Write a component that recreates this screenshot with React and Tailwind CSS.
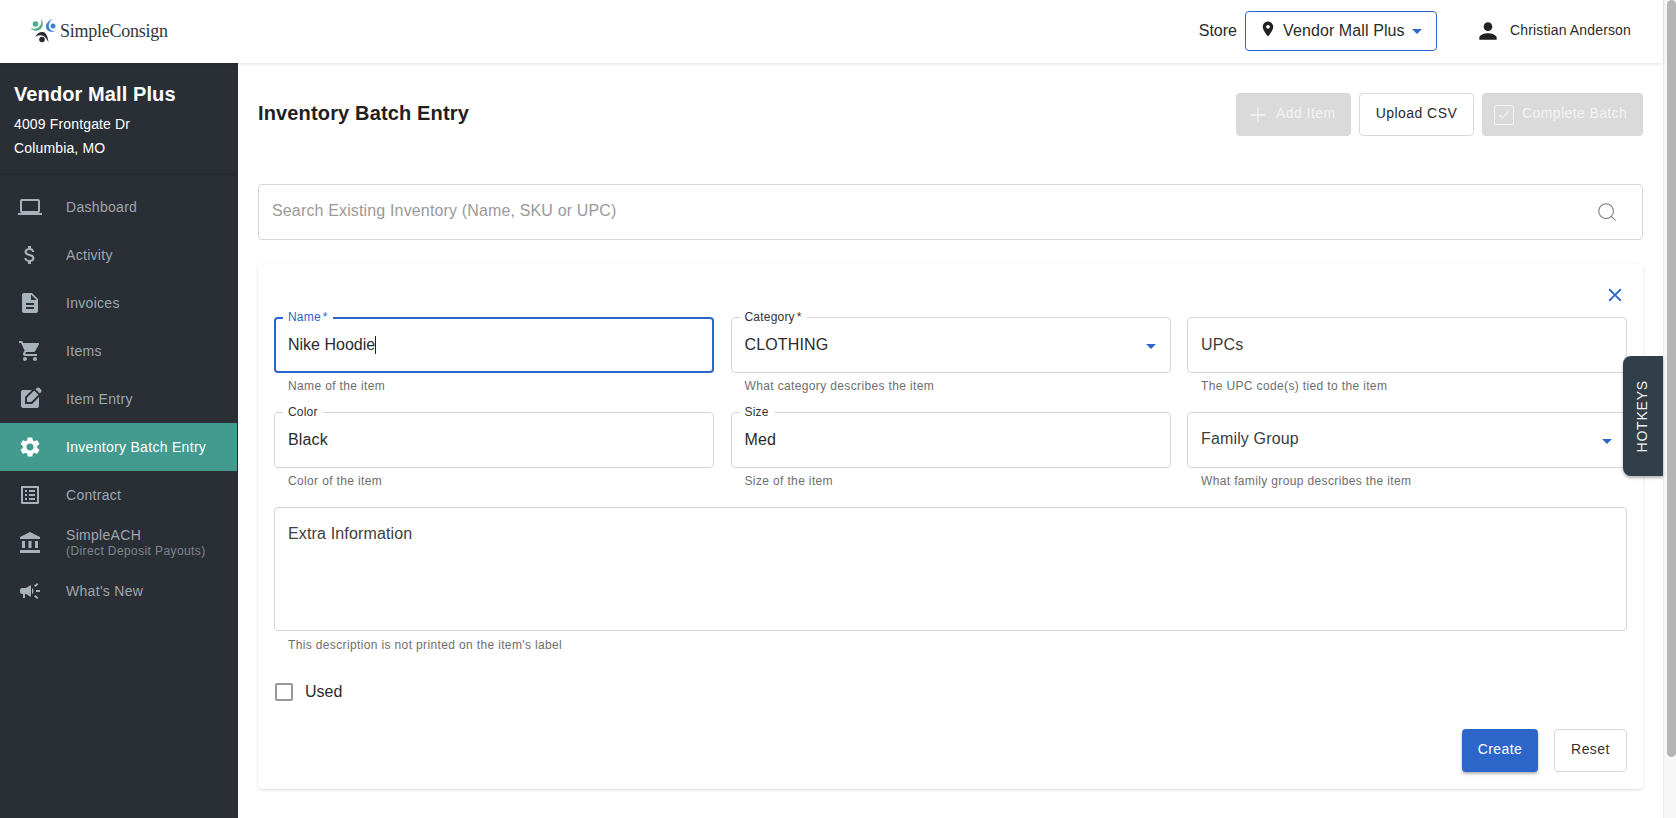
import { Plus, Search } from "lucide-react";
import {
  MdAccountBalance,
  MdArrowDropDown,
  MdAttachMoney,
  MdCampaign,
  MdClose,
  MdDescription,
  MdEditSquare,
  MdLaptop,
  MdListAlt,
  MdLocationOn,
  MdPerson,
  MdSettings,
  MdShoppingCart,
} from "react-icons/md";

const navItems = [
  { label: "Dashboard", icon: MdLaptop },
  { label: "Activity", icon: MdAttachMoney },
  { label: "Invoices", icon: MdDescription },
  { label: "Items", icon: MdShoppingCart },
  { label: "Item Entry", icon: MdEditSquare },
  { label: "Inventory Batch Entry", icon: MdSettings, active: true },
  { label: "Contract", icon: MdListAlt },
  { label: "SimpleACH", sub: "(Direct Deposit Payouts)", icon: MdAccountBalance },
  { label: "What's New", icon: MdCampaign },
];

function Logo() {
  return (
    <div className="flex items-center gap-[4px]">
      <svg width="26" height="26" viewBox="0 0 26 26">
        <circle cx="5.5" cy="6" r="2.8" fill="#4fae84" />
        <path d="M0.5 10C4 11.5 9 10.5 10.5 7C11.5 5 11.5 3 11 0.5C13.5 4 13.5 9 10 11.5C7 13.5 3 13 0.5 10Z" fill="#4fae84" />
        <circle cx="23" cy="8" r="2.5" fill="#3f7fd0" />
        <path d="M22 1C18 3 15.5 6 16 9.5C16.5 12.5 20 14.5 25 14C21 13 19 11 18.8 8.5C18.6 6 20 3 22 1Z" fill="#3f7fd0" />
        <path d="M5 19C7 15.5 10 13.5 13 14C16 14.5 18 18.5 18.5 24.5C16.5 20.5 15 18 12 17.5C9.5 17 7 17.5 5 19Z" fill="#26292d" />
        <circle cx="12" cy="21.5" r="2.8" fill="#26292d" />
      </svg>
      <span className="mt-[1px] font-['Liberation_Serif',serif] text-[18px] leading-none tracking-[-0.25px] text-[#33363a]">
        SimpleConsign
      </span>
    </div>
  );
}

function Field({ label, value, helper, focused, select, required, children, tall, firstRow, dim }) {
  const boxHeight = tall ? "h-[124px]" : firstRow ? "h-[56px]" : "h-[55.5px]";
  const helperHeight = tall ? "h-[48px] pt-[6px]" : firstRow ? "h-[39px] pt-[5px]" : "h-[39.5px] pt-[5px]";

  return (
    <div>
      <div
        className={`relative rounded-[4px] bg-white ${boxHeight} ${
          focused ? "border-2 border-[#2d66c9]" : "border border-[#d6d6d6]"
        }`}
      >
        {label && (
          <span
            className={`absolute ${focused ? "-top-[10px] left-[7px]" : "-top-[9px] left-[8px]"} bg-white px-[5px] text-xs leading-[16px] tracking-[0.2px] ${
              focused ? "text-[#2d66c9]" : "text-[#333]"
            }`}
          >
            {label}
            {required && <span className="ml-[2px]">*</span>}
          </span>
        )}
        <div
          className={`flex items-center text-base ${dim ? "text-[#3d3d3d]" : "text-[#2b2b2b]"} ${
            focused ? "pl-[12px] tracking-[0]" : "pl-[13px] tracking-[0.15px]"
          } ${tall ? "pt-[14px]" : "h-full"}`}
        >
          {value}
          {children}
        </div>
        {select && (
          <MdArrowDropDown className="absolute right-[7px] top-[16px] text-[#2d66c9]" size={24} />
        )}
      </div>
      <div className={`pl-[14px] text-xs leading-[16px] tracking-[0.36px] text-[#6e6e6e] ${helperHeight}`}>
        {helper}
      </div>
    </div>
  );
}

export default function App() {
  return (
    <div className="relative flex h-screen w-full overflow-hidden bg-white font-['Liberation_Sans',Arial,sans-serif]">
      <div className="flex h-full w-[1663px] shrink-0 flex-col">
        <header className="relative z-10 flex h-[63px] shrink-0 items-center justify-between bg-white pb-[2px] pl-[30px] pr-[32px] shadow-[0_1px_3px_rgba(0,0,0,0.12)]">
          <Logo />
          <div className="flex items-center">
            <span className="mr-[8px] text-base text-[#2b2b2b]">Store</span>
            <div className="flex h-[40px] w-[192px] items-center rounded-[4px] border border-[#2d66c9] pl-[13px] text-[#2b2b2b]">
              <MdLocationOn size={18} className="mb-[4px] text-[#222]" />
              <span className="ml-[6px] text-base tracking-[0.1px]">Vendor Mall Plus</span>
              <MdArrowDropDown size={24} className="text-[#2d66c9]" />
            </div>
            <MdPerson size={26} className="ml-[38px] text-[#222]" />
            <span className="mb-[2px] ml-[9px] text-sm tracking-[0.15px] text-[#2b2b2b]">Christian Anderson</span>
          </div>
        </header>

        <div className="flex min-h-0 flex-1">
          <aside className="h-full w-[238px] shrink-0 bg-[#2a2f36]">
            <div className="h-[112px] border-b border-[#23272d] pl-[14px] pt-[19px] text-white">
              <div className="text-xl font-bold leading-[24px] tracking-[0.1px]">Vendor Mall Plus</div>
              <div className="mt-[6px] text-sm leading-[24px] tracking-[0.15px]">4009 Frontgate Dr</div>
              <div className="text-sm leading-[24px] tracking-[0.15px]">Columbia, MO</div>
            </div>
            <nav className="pt-[8px]">
              {navItems.map((item) => {
                const Icon = item.icon;
                return (
                  <div
                    key={item.label}
                    className={`flex h-[48px] w-[237px] items-center ${
                      item.active ? "bg-[#439a8f] text-white" : "text-[#9fa6ad]"
                    }`}
                  >
                    <div className={`flex w-[66px] justify-center pr-[6px] ${item.active ? "text-white" : "text-[#a7b2bb]"}`}>
                      <Icon size={24} />
                    </div>
                    <div>
                      <div className="text-sm leading-[16px] tracking-[0.3px]">{item.label}</div>
                      {item.sub && (
                        <div className="text-xs leading-[16px] tracking-[0.4px] text-[#7f868d]">{item.sub}</div>
                      )}
                    </div>
                  </div>
                );
              })}
            </nav>
          </aside>

          <main className="min-w-0 flex-1 px-[20px] pt-[30px]">
            <div className="flex h-[91px] items-start justify-between">
              <h1 className="pt-[8px] text-xl font-bold leading-[24px] tracking-[0.15px] text-[#212121]">Inventory Batch Entry</h1>
              <div className="flex gap-[8px]">
                <button className="flex h-[43px] w-[115px] items-center gap-[6px] rounded-[4px] bg-[#dadada] pl-[10px] text-sm tracking-[0.45px] text-[#f3f3f3]">
                  <Plus size={24} strokeWidth={1.4} />
                  <span className="mb-[3px]">Add Item</span>
                </button>
                <button className="h-[43px] w-[115px] rounded-[4px] border border-[#d8d8d8] bg-white pb-[3px] text-sm tracking-[0.45px] text-[#2b2b2b]">
                  Upload CSV
                </button>
                <button className="flex h-[43px] w-[161px] items-center gap-[8px] rounded-[4px] bg-[#dadada] pl-[12px] text-sm tracking-[0.4px] text-[#f3f3f3]">
                  <span className="flex h-[20px] w-[20px] items-center justify-center rounded-[2px] border border-[#f3f3f3]">
                    <svg width="12" height="10" viewBox="0 0 12 10" fill="none" stroke="#f3f3f3" strokeWidth="1.2">
                      <path d="M1.5 5l3 3 6-6.500" />
                    </svg>
                  </span>
                  <span className="mb-[3px]">Complete Batch</span>
                </button>
              </div>
            </div>

            <div className="flex h-[56px] items-center justify-between rounded-[4px] border border-[#d6d6d6] pb-[2px] pl-[13px] pr-[24px]">
              <span className="text-base tracking-[0.15px] text-[#9a9a9a]">Search Existing Inventory (Name, SKU or UPC)</span>
              <Search size={22} strokeWidth={1.1} className="mt-[2px] text-[#777]" />
            </div>

            <section className="mt-[24px] h-[525px] rounded-[4px] bg-white px-[16px] shadow-[0_1px_3px_rgba(0,0,0,0.14)]">
              <div className="flex h-[53px] items-start justify-end pr-[1px] pt-[20px]">
                <MdClose size={22} className="text-[#2d66c9]" />
              </div>
              <div className="grid grid-cols-3 gap-x-[16.5px]">
                <Field firstRow label="Name" required focused value="Nike Hoodie" helper="Name of the item">
                  <span className="h-[18px] w-px bg-[#222]" />
                </Field>
                <Field firstRow label="Category" required value="CLOTHING" select helper="What category describes the item" />
                <Field firstRow dim value="UPCs" helper="The UPC code(s) tied to the item" />
                <Field label="Color" value="Black" helper="Color of the item" />
                <Field label="Size" value="Med" helper="Size of the item" />
                <Field dim value={<span className="mb-[2px]">Family Group</span>} select helper="What family group describes the item" />
                <div className="col-span-3">
                  <Field tall dim value="Extra Information" helper="This description is not printed on the item's label" />
                </div>
              </div>
              <div className="ml-px mt-px flex items-center gap-[12px]">
                <span className="h-[18px] w-[18px] rounded-[2px] border-2 border-[#999]" />
                <span className="text-base text-[#2b2b2b]">Used</span>
              </div>
              <div className="mt-[25px] flex justify-end gap-[16px]">
                <button className="h-[43px] w-[76px] rounded-[4px] bg-[#2d66c9] pb-[3px] text-sm tracking-[0.45px] text-white shadow-[0_2px_3px_rgba(0,0,0,0.3)]">
                  Create
                </button>
                <button className="h-[43px] w-[73px] rounded-[4px] border border-[#d8d8d8] bg-white pb-[3px] text-sm tracking-[0.45px] text-[#333]">
                  Reset
                </button>
              </div>
            </section>
          </main>
        </div>
      </div>

      <div className="flex h-full flex-1 justify-end border-l border-[#ececec] bg-[#f7f7f7]">
        <div className="h-[757px] w-[9px] rounded-[5px] bg-[#b5b5b5]" />
      </div>

      <div className="absolute left-[1623px] top-[356px] flex h-[120px] w-[40px] items-center justify-center rounded-l-[8px] bg-[#323e48] pr-[2px] shadow-[0_2px_3px_rgba(0,0,0,0.3)]">
        <span className="rotate-180 text-sm tracking-[0.8px] text-[#eef0f1] [writing-mode:vertical-rl]">HOTKEYS</span>
      </div>
    </div>
  );
}
